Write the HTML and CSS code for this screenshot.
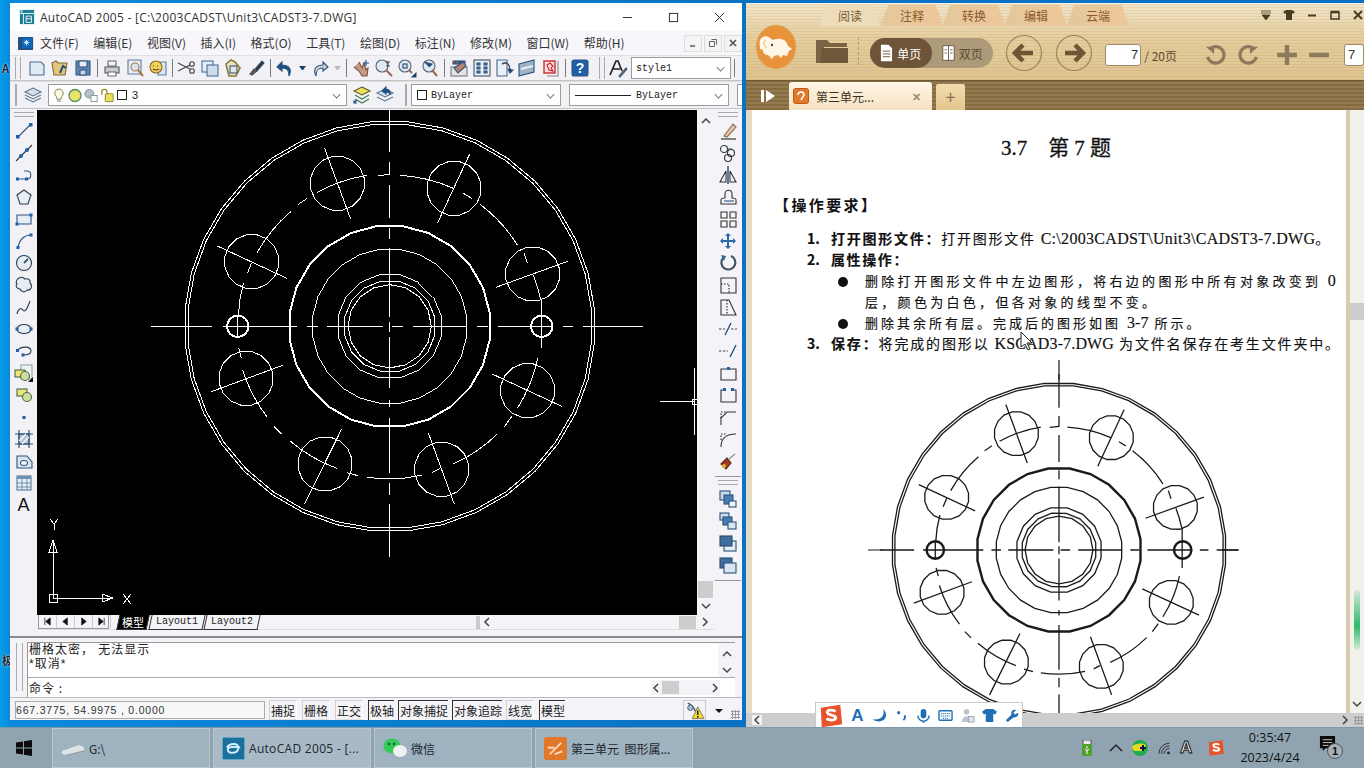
FILE: index.html
```html
<!DOCTYPE html>
<html lang="zh">
<head>
<meta charset="utf-8">
<title>AutoCAD 2005</title>
<link rel="stylesheet" href="styles.css">
</head>
<body>
<svg class="defs" aria-hidden="true">
  <defs>
    <polygon id="p16" class="fp" points="1,0 .924,.383 .707,.707 .383,.924 0,1 -.383,.924 -.707,.707 -.924,.383 -1,0 -.924,-.383 -.707,-.707 -.383,-.924 0,-1 .383,-.924 .707,-.707 .924,-.383"/>
    <polygon id="p24" class="fp" points="1,0 .966,.259 .866,.5 .707,.707 .5,.866 .259,.966 0,1 -.259,.966 -.5,.866 -.707,.707 -.866,.5 -.966,.259 -1,0 -.966,-.259 -.866,-.5 -.707,-.707 -.5,-.866 -.259,-.966 0,-1 .259,-.966 .5,-.866 .707,-.707 .866,-.5 .966,-.259"/>
    <polygon id="p36" class="fp" points="1,0 .985,.174 .94,.342 .866,.5 .766,.643 .643,.766 .5,.866 .342,.94 .174,.985 0,1 -.174,.985 -.342,.94 -.5,.866 -.643,.766 -.766,.643 -.866,.5 -.94,.342 -.985,.174 -1,0 -.985,-.174 -.94,-.342 -.866,-.5 -.766,-.643 -.643,-.766 -.5,-.866 -.342,-.94 -.174,-.985 0,-1 .174,-.985 .342,-.94 .5,-.866 .643,-.766 .766,-.643 .866,-.5 .94,-.342 .985,-.174"/>
    <g id="flange" class="flange" transform="translate(-659 -649)">
      <use href="#p36" transform="translate(659 649) rotate(5) scale(616)"/>
      <use href="#p36" transform="translate(659 649) rotate(5) scale(607)"/>
      <use class="thick" href="#p24" transform="translate(659 649) rotate(7.5) scale(303)"/>
      <use href="#p24" transform="translate(659 649) rotate(7.5) scale(233)"/>
      <use href="#p16" transform="translate(659 649) rotate(11.25) scale(158)"/>
      <use href="#p16" transform="translate(659 649) rotate(11.25) scale(138)"/>
      <use href="#p16" transform="translate(659 649) rotate(0) scale(125)"/>
      <use href="#p16" transform="translate(502 220) rotate(11.25) scale(82)"/>
      <use href="#p16" transform="translate(852 235) rotate(11.25) scale(82)"/>
      <use href="#p16" transform="translate(245 455) rotate(11.25) scale(82)"/>
      <use href="#p16" transform="translate(1088 492) rotate(11.25) scale(82)"/>
      <use href="#p16" transform="translate(228 805) rotate(11.25) scale(82)"/>
      <use href="#p16" transform="translate(1073 842) rotate(11.25) scale(82)"/>
      <use href="#p16" transform="translate(465 1062) rotate(11.25) scale(82)"/>
      <use href="#p16" transform="translate(815 1078) rotate(11.25) scale(82)"/>
      <use class="thick" href="#p16" transform="translate(203 649) scale(32)"/>
      <use class="thick" href="#p16" transform="translate(1115 649) scale(32)"/>
      <path d="M659 0V125M659 155V195M659 225V325M659 355V388M659 415V620M659 635V665M659 680V835M659 870V890M659 925V1090M659 1120V1155M659 1182V1320"/>
      <path d="M0 649H125M158 649H380M410 649H445M472 649H638M665 649H700M730 649H892M922 649H955M985 649H1145M1178 649H1210M1240 649H1320"/>
      <path d="M203 617V680M1113 570V690"/>
      <path d="M463 113L542 328M899 132L802 340M142 408L350 505M1193 454L978 532M338 766L124 845M966 792L1175 889M515 957L403 1183M775 969L853 1183"/>
      <path d="M690 196A454 454 0 0 1 850 235M880 250L905 265M930 283A454 454 0 0 1 1042 405M1062 430L1072 460M1090 495A454 454 0 0 1 1112 570M1113 690V715M1103 745A454 454 0 0 1 1042 895M1025 920L1003 950M982 972A454 454 0 0 1 848 1063M810 1075L787 1087M755 1096A454 454 0 0 1 592 1102M563 1097L530 1088M500 1075A454 454 0 0 1 360 993M335 973L312 950M292 922A454 454 0 0 1 218 780M214 745L206 715M205 615A454 454 0 0 1 220 520M232 490L245 458M260 430A454 454 0 0 1 362 305M385 283L412 265M440 248A454 454 0 0 1 592 196M625 197L659 193"/>
    </g>
  </defs>
</svg>

<main class="desktop">
  <div class="peek peek-a">A</div>
  <div class="peek peek-b">极</div>

  <section class="win cad">
    <header class="title">
      <svg class="appicon" viewBox="0 0 18 18"><rect x="1" y="1" width="16" height="16" fill="#1b7f96"/><path d="M1 5h16M5 5v12" stroke="#fff" stroke-width="1"/><path d="M8 8h6v7h-6zM8 11h6" fill="none" stroke="#fff"/><path d="M2 1l1 3 1-3" stroke="#bfe" fill="none"/></svg>
      <span class="title-text">AutoCAD 2005 - [C:\2003CADST\Unit3\CADST3-7.DWG]</span>
      <div class="caps">
        <svg viewBox="0 0 12 12"><path d="M1 6h10" stroke="#222"/></svg>
        <svg viewBox="0 0 12 12"><rect x="1.500" y="1.500" width="9" height="9" fill="none" stroke="#222"/></svg>
        <svg viewBox="0 0 12 12"><path d="M1 1l10 10M11 1L1 11" stroke="#222"/></svg>
      </div>
    </header>

    <nav class="menu">
      <svg class="docicon" viewBox="0 0 20 18"><rect x="1" y="2" width="16" height="14" rx="1" fill="#24507c"/><rect x="5" y="3" width="11" height="11" fill="#0d66b8"/><path d="M10 5v6M7 8h6M8 6l4 4M12 6l-4 4" stroke="#cfe9ff"/></svg>
      <span>文件(F)</span><span>编辑(E)</span><span>视图(V)</span><span>插入(I)</span><span>格式(O)</span><span>工具(T)</span><span>绘图(D)</span><span>标注(N)</span><span>修改(M)</span><span>窗口(W)</span><span>帮助(H)</span>
      <div class="mdi">
        <b><svg viewBox="0 0 10 10"><path d="M2 8h5" stroke="#666" stroke-width="1.600"/></svg></b>
        <b><svg viewBox="0 0 10 10"><path d="M3.500 1.500h5v5M1.500 3.500h5v5h-5z" fill="none" stroke="#666"/></svg></b>
        <b><svg viewBox="0 0 10 10"><path d="M2 2l6 6M8 2L2 8" stroke="#555" stroke-width="1.700"/></svg></b>
      </div>
    </nav>

    <div class="tb tb1">
      <i class="grip"></i>
      <svg class="i" viewBox="0 0 20 20"><path d="M3 4h11l3 3v10H3z" fill="#dfeaf5" stroke="#4a6f96"/></svg>
      <svg class="i" viewBox="0 0 20 20"><path d="M2 5l4-2 2 2h9l-2 12H4z" fill="#e2c67c" stroke="#7c6a35"/><path d="M10 15l3-7 3 2" stroke="#1f4f80" stroke-width="2" fill="none"/></svg>
      <svg class="i" viewBox="0 0 20 20"><path d="M3 3h14v14H3z" fill="#5d86b4" stroke="#33577f"/><rect x="6" y="3" width="8" height="6" fill="#e8eef6"/><rect x="7" y="12" width="6" height="5" fill="#c9d6e6"/></svg>
      <i class="sep"></i>
      <svg class="i" viewBox="0 0 20 20"><path d="M6 3h8v5H6z" fill="#f4f4f4" stroke="#666"/><path d="M3 9h14v6H3z" fill="#c8ccd4" stroke="#555"/><path d="M6 14h8v4H6z" fill="#fff" stroke="#666"/></svg>
      <svg class="i" viewBox="0 0 20 20"><path d="M3 2h13v14H3z" fill="#e6eef7" stroke="#5a7da3"/><circle cx="10" cy="9" r="4" fill="#d7e5ef" stroke="#a87b3a"/><path d="M13 12l5 6" stroke="#a87b3a" stroke-width="2"/></svg>
      <svg class="i" viewBox="0 0 20 20"><path d="M12 4h6v13h-8z" fill="#dbe8f3" stroke="#5a7da3"/><circle cx="8" cy="9" r="6" fill="#f2d35c" stroke="#8a6d1e"/><path d="M5 8h1M9 8h1M5 11q3 2 6 0" stroke="#533"/></svg>
      <i class="sep"></i>
      <svg class="i" viewBox="0 0 20 20"><path d="M1 5l12 6M1 13l12-6" stroke="#444"/><circle cx="15" cy="6" r="2.300" fill="none" stroke="#444"/><circle cx="15" cy="13" r="2.300" fill="none" stroke="#444"/></svg>
      <svg class="i" viewBox="0 0 20 20"><rect x="2" y="3" width="11" height="11" fill="#e6eef7" stroke="#4a6f96"/><rect x="7" y="7" width="11" height="11" fill="#cddcec" stroke="#4a6f96"/></svg>
      <svg class="i" viewBox="0 0 20 20"><path d="M3 6l5-4 4 2 5 6-4 8H6z" fill="#e8e4c8" stroke="#8d7a3a" stroke-width="1.600"/><rect x="7" y="8" width="7" height="7" fill="#dbe8f3" stroke="#456"/></svg>
      <svg class="i" viewBox="0 0 20 20"><path d="M4 16l4-5 3 2-5 4z" fill="#8c4a1e"/><path d="M9 11l7-8 2 2-7 8" fill="#333"/></svg>
      <i class="sep"></i>
      <svg class="i" viewBox="0 0 20 20"><path d="M7 4L2 9l5 4V10c5 0 7 2 7 8 3-6 1-11-7-11z" fill="#1c4f84"/></svg>
      <em class="drop"></em>
      <svg class="i" viewBox="0 0 20 20"><path d="M13 4l5 5-5 4V10c-5 0-7 2-7 8-3-6-1-11 7-11z" fill="#d2d2d2"/></svg>
      <em class="drop off"></em>
      <i class="sep"></i>
      <svg class="i" viewBox="0 0 20 20"><path d="M3 9l5 4 3 5h5l1-8-2 2-2-7-2 5-3-6" fill="#c79a86" stroke="#7a5244"/><path d="M15 2v6M12 5h6" stroke="#1f4f80"/></svg>
      <svg class="i" viewBox="0 0 20 20"><circle cx="8" cy="8" r="6" fill="#dfe9f3" stroke="#567"/><path d="M12 12l6 6" stroke="#965" stroke-width="2"/><path d="M14 3v5M12 4h4M12 8h4" stroke="#333" stroke-width=".8"/></svg>
      <svg class="i" viewBox="0 0 20 20"><circle cx="8" cy="8" r="6" fill="#dfe9f3" stroke="#567"/><rect x="6" y="6" width="4" height="4" fill="none" stroke="#246"/><path d="M12 12l3 3" stroke="#965" stroke-width="2"/><path d="M15 19h4v-4z" fill="#111"/></svg>
      <svg class="i" viewBox="0 0 20 20"><circle cx="9" cy="8" r="6" fill="#dfe9f3" stroke="#567"/><path d="M4 4l8 2-3 3" fill="#1f4f80"/><path d="M12 12l5 6" stroke="#965" stroke-width="2"/></svg>
      <i class="sep"></i>
      <svg class="i" viewBox="0 0 20 20"><rect x="2" y="9" width="16" height="9" fill="#e4e4e4" stroke="#778"/><path d="M4 3h3v3H4z" fill="#d33"/><path d="M7 3h3v3H7z" fill="#3a3"/><path d="M10 3h3v3h-3z" fill="#33c"/><path d="M13 3h3v3h-3z" fill="#c3c"/><path d="M5 10l9-6 3 4-8 7z" fill="#b9826a"/></svg>
      <svg class="i" viewBox="0 0 20 20"><rect x="2" y="2" width="16" height="16" fill="#eaf0f7" stroke="#456"/><path d="M5 5h3v2H5zM12 5h3v2h-3zM5 9h3v2H5zM12 9h3v2h-3zM5 13h3v2H5zM12 13h3v2h-3z" fill="#46709c"/></svg>
      <svg class="i" viewBox="0 0 20 20"><path d="M2 2h10v16H2z" fill="#e9f0f7" stroke="#47698d"/><path d="M7 6c5-3 8 1 8 6" fill="none" stroke="#456" stroke-width="1.600"/><path d="M13 11l2 4 3-3z" fill="#234"/></svg>
      <svg class="i" viewBox="0 0 20 20"><path d="M1 6l15-4v12L1 18z" fill="#9eb3c6"/><path d="M3 11l12-3" stroke="#e9eef3" stroke-width="2"/></svg>
      <svg class="i" viewBox="0 0 20 20"><path d="M17 3v15H6" fill="none" stroke="#888"/><path d="M3 3h11v12H3z" fill="#f8dfe0" stroke="#c33" stroke-width="1.400"/><path d="M6 7l3-2 3 3-2 2 2 3-4-1z" fill="none" stroke="#c22"/></svg>
      <i class="sep"></i>
      <svg class="i" viewBox="0 0 20 20"><rect x="2" y="2" width="16" height="16" rx="2" fill="#1f5fa8"/><text x="10" y="15" class="help">?</text></svg>
      <i class="grip grip-mid"></i>
      <svg class="i" viewBox="0 0 20 20"><path d="M2 17L8 3h2l4 10M5 11h7" fill="none" stroke="#222" stroke-width="1.700"/><path d="M11 18l7-8 1 1-7 8z" fill="#b8833c"/></svg>
      <div class="combo combo-style"><span class="mono">style1</span><u></u></div>
      <i class="sep sep-end"></i>
    </div>

    <div class="tb tb2">
      <i class="grip"></i>
      <svg class="i" viewBox="0 0 20 20"><path d="M10 3l8 4-8 4-8-4z" fill="#d7e0ea" stroke="#5a7692"/><path d="M2 10l8 4 8-4M2 13l8 4 8-4" fill="none" stroke="#5a7692"/></svg>
      <div class="combo combo-layer">
        <svg viewBox="0 0 14 16" class="ci"><path d="M7 1a4.600 4.600 0 0 1 3 8l-1 3H5L4 9a4.600 4.600 0 0 1 3-8zM5 14h4" fill="#fdfbe3" stroke="#7b7b5c"/></svg>
        <svg viewBox="0 0 14 14" class="ci"><circle cx="7" cy="7" r="6" fill="#e9e26a" stroke="#4f8f68" stroke-width="1.300"/></svg>
        <svg viewBox="0 0 16 16" class="ci"><circle cx="6" cy="6" r="5" fill="#b3c0c8" stroke="#7a8b95"/><rect x="8" y="8" width="7" height="7" fill="#fff" stroke="#888"/></svg>
        <svg viewBox="0 0 16 16" class="ci"><path d="M2 7V4a3 3 0 0 1 6 0v3" fill="none" stroke="#9b8b2e" stroke-width="1.500"/><rect x="6" y="6" width="9" height="9" rx="1" fill="#ece15e" stroke="#8a7a24"/></svg>
        <span class="swatch"></span><span class="layer-name">3</span><u></u>
      </div>
      <svg class="i i-lm" viewBox="0 0 20 20"><path d="M10 2l8 4-8 4-8-4z" fill="#ecdf62" stroke="#5c5a20"/><path d="M3 10l7 4 7-4M3 14l7 4 7-4" fill="none" stroke="#3f7d5a"/><path d="M2 18l3-3M2 15v3h3" stroke="#1f4f80" fill="none"/></svg>
      <svg class="i" viewBox="0 0 20 20"><path d="M10 4l8 4-8 4-8-4z" fill="#d7e0ea" stroke="#5a7692"/><path d="M2 12l8 4 8-4" fill="none" stroke="#5a7692"/><path d="M11 2L7 6l4 3V7c3 0 4 1 4 3 1-4-1-6-4-6z" fill="#1c4f84"/></svg>
      <i class="grip grip-two"></i>
      <div class="combo combo-color"><span class="swatch"></span><span class="mono">ByLayer</span><u></u></div>
      <i class="vline"></i>
      <div class="combo combo-type"><span class="ln"></span><span class="mono">ByLayer</span><u></u></div>
      <i class="vline"></i>
      <div class="combo combo-last"><span class="ln"></span></div>
    </div>

    <div class="work">
      <aside class="vbar vbar-l">
        <i class="hgrip"></i>
        <svg class="i" viewBox="0 0 20 20"><path d="M4 16L16 4"/><rect class="d" x="2" y="14" width="3.500" height="3.500"/><rect class="d" x="15" y="2" width="3.500" height="3.500"/></svg>
        <svg class="i" viewBox="0 0 20 20"><path class="k" d="M2 18L18 2"/><circle class="d" cx="7" cy="13" r="2"/><circle class="d" cx="13" cy="7" r="2"/></svg>
        <svg class="i" viewBox="0 0 20 20"><path d="M4 14h9c5 0 5-8 0-8h-3"/><rect class="d" x="2" y="12.500" width="3" height="3"/><rect class="d" x="11" y="12.500" width="3" height="3"/></svg>
        <svg class="i" viewBox="0 0 20 20"><path d="M10 3l7 5-3 9H6L3 8z" class="k2"/></svg>
        <svg class="i" viewBox="0 0 20 20"><path d="M3 6h14v9H3z" fill="#e6edf5"/><rect class="d" x="1.500" y="13.500" width="3" height="3"/><rect class="d" x="15.500" y="4.500" width="3" height="3"/></svg>
        <svg class="i" viewBox="0 0 20 20"><path d="M4 17C5 9 10 4 17 4"/><rect class="d" x="2.500" y="15" width="3" height="3"/><rect class="d" x="15.500" y="2.500" width="3" height="3"/></svg>
        <svg class="i" viewBox="0 0 20 20"><circle cx="10" cy="10" r="7.500" class="k2"/><path d="M10 10l4-4" stroke-width="1.800"/></svg>
        <svg class="i" viewBox="0 0 20 20"><path class="k2" d="M5 3c3-2 5 0 6 1 3-1 6 1 5 4 3 3 1 8-3 7-2 3-6 2-7-1-3 0-5-3-3-5-2-2 0-5 2-6z"/></svg>
        <svg class="i" viewBox="0 0 20 20"><path class="k3" d="M3 17c1-5 4-7 6-4s4-1 7-9"/></svg>
        <svg class="i" viewBox="0 0 20 20"><ellipse cx="10" cy="10" rx="7" ry="4.500" class="k2"/><rect class="d" x="1.500" y="8.500" width="3" height="3"/><rect class="d" x="15.500" y="8.500" width="3" height="3"/></svg>
        <svg class="i" viewBox="0 0 20 20"><path class="k3" d="M4 9c3-4 13-4 13 1 0 3-4 4-8 4"/><rect class="d" x="2" y="8" width="3" height="3"/><rect class="d" x="7.500" y="12.500" width="3" height="3"/></svg>
        <svg class="i" viewBox="0 0 20 20"><rect x="7" y="2" width="11" height="14" fill="#f0f2f6" stroke="#8aa"/><rect x="1" y="7" width="10" height="7" fill="#ece47a" stroke="#4a6b46"/><circle cx="11" cy="13" r="4.500" fill="#cfdca0" stroke="#4a6b46"/><path d="M14 19h5v-5z" fill="#111" stroke="none"/></svg>
        <svg class="i" viewBox="0 0 20 20"><rect x="3" y="4" width="10" height="7" fill="#ece47a" stroke="#4a6b46"/><circle cx="13" cy="12" r="4.500" fill="#cfdca0" stroke="#4a6b46"/></svg>
        <svg class="i" viewBox="0 0 20 20"><rect class="d" x="8.500" y="9" width="3" height="3"/></svg>
        <svg class="i" viewBox="0 0 20 20"><path d="M5 5h10v10H5z" fill="#b9c8d8"/><path d="M1 5h18M1 15h18M5 1v18M15 1v18" stroke="#2b4a70"/><path d="M5 12l7-7M8 15l7-7" stroke="#fff"/></svg>
        <svg class="i" viewBox="0 0 20 20"><path d="M3 5h10l5 6v6H3z" fill="#d9e6f2"/><ellipse cx="10" cy="12" rx="3.500" ry="2.500" fill="#fff"/></svg>
        <svg class="i" viewBox="0 0 20 20"><rect x="3" y="3" width="14" height="14" fill="#e6eef7" stroke="#5b7c9f"/><rect x="3" y="3" width="14" height="3" fill="#6d8fb2" stroke="none"/><path d="M3 10h14M3 14h14M8 6v11M13 6v11" stroke="#5b7c9f" stroke-width=".8"/></svg>
        <span class="a-tool">A</span>
      </aside>

      <div class="drawcol">
        <div class="drawrow">
          <div class="canvas">
            <svg class="cad-svg" viewBox="0 0 660 505">
              <use href="#flange" transform="translate(352.700 216.300) scale(.3333)"/>
              <g class="ucs">
                <path d="M114 216.500H133M573 216.500H606M352.500 440V447"/>
                <path d="M16 488V430M16 488H75"/>
                <rect x="12" y="484" width="8" height="8"/>
                <path d="M12 442l4-12 4 12zM65 484l11 4-11 4z"/>
                <path d="M13 409l4 5 4-5M17 414v6M86 484l8 10M94 484l-8 10"/>
                <path d="M657 258V325M623 291H657"/>
                <rect x="655" y="289" width="5" height="5"/>
              </g>
            </svg>
          </div>
          <div class="vscroll">
            <svg class="arr" viewBox="0 0 10 10"><path d="M1 7l4-4 4 4"/></svg>
            <span class="fill"></span>
            <span class="sthumb"></span>
            <svg class="arr" viewBox="0 0 10 10"><path d="M1 3l4 4 4-4"/></svg>
          </div>
        </div>
        <div class="tabs">
          <div class="navs">
            <svg viewBox="0 0 10 10"><path d="M2 1v8M8 1v8L3 5z"/></svg>
            <svg viewBox="0 0 10 10"><path d="M7 1v8L2 5z"/></svg>
            <svg viewBox="0 0 10 10"><path d="M3 1v8l5-4z"/></svg>
            <svg viewBox="0 0 10 10"><path d="M8 1v8M2 1v8l5-4z"/></svg>
          </div>
          <span class="tab tab-on">模型</span>
          <span class="tab">Layout1</span>
          <span class="tab">Layout2</span>
          <div class="hs">
            <span class="hs-start"></span>
            <svg class="arr" viewBox="0 0 10 10"><path d="M7 1L3 5l4 4"/></svg>
            <span class="fill"></span>
            <span class="hthumb"></span>
            <svg class="arr" viewBox="0 0 10 10"><path d="M3 1l4 4-4 4"/></svg>
          </div>
        </div>
      </div>

      <aside class="vbar vbar-r">
        <i class="hgrip"></i>
        <svg class="i" viewBox="0 0 20 20"><path d="M3 18h15" stroke="#222"/><path d="M6 15L15 3l3 3-9 10z" fill="#e9c2a8" stroke="#8a6a4e"/></svg>
        <svg class="i" viewBox="0 0 20 20"><g class="k"><circle cx="6" cy="6" r="3.500"/><circle cx="13" cy="10" r="3.500"/><circle cx="10" cy="15" r="3.500"/></g><path d="M9 6h5"/></svg>
        <svg class="i" viewBox="0 0 20 20"><path d="M10 1v18" stroke-width="1.500"/><path class="k" d="M8 6v11H2zM12 6v11h6z"/></svg>
        <svg class="i" viewBox="0 0 20 20"><path class="k" d="M3 17v-4c0-2 3-2 4-2V7c0-5 7-5 7 0v4c2 0 4 0 4 2v4z"/><path d="M6 14c3 0 9 0 10 0"/></svg>
        <svg class="i" viewBox="0 0 20 20"><path class="k" d="M3 3h6v6H3zM12 3h6v6h-6zM3 12h6v6H3zM12 12h6v6h-6z"/></svg>
        <svg class="i" viewBox="0 0 20 20"><path d="M10 2l3 3h-2v4h4V7l3 3-3 3v-2h-4v4h2l-3 3-3-3h2v-4H5v2l-3-3 3-3v2h4V5H7z" fill="#2b6aa8" stroke="none"/></svg>
        <svg class="i" viewBox="0 0 20 20"><path d="M5 5A7 7 0 1 0 13 3" stroke="#456" stroke-width="2.200"/><path d="M3 2l5 1-2 5z" fill="#2b6aa8" stroke="none"/></svg>
        <svg class="i" viewBox="0 0 20 20"><path class="k" d="M3 3h15v15H3z"/><path d="M3 9h8v9" stroke-dasharray="1.500 1.500" stroke="#222"/></svg>
        <svg class="i" viewBox="0 0 20 20"><path class="k" d="M3 3h8l7 15H3z"/><path d="M9 3v15" stroke-dasharray="1.500 1.500" stroke="#222"/></svg>
        <svg class="i" viewBox="0 0 20 20"><path d="M1 10h6M13 10h6" stroke-dasharray="2.500 1.500" stroke="#445"/><path d="M7 16L13 4" stroke-width="1.400"/></svg>
        <svg class="i" viewBox="0 0 20 20"><path d="M1 10h9" stroke-dasharray="2.500 1.500" stroke="#445"/><path d="M12 16L18 4" stroke-width="1.400"/></svg>
        <svg class="i" viewBox="0 0 20 20"><path class="k" d="M3 6h15v11H3z"/><rect class="d" x="9" y="4" width="3" height="3"/></svg>
        <svg class="i" viewBox="0 0 20 20"><path class="k" d="M6 5H3v12h15V5h-3"/><rect class="d" x="5" y="3" width="3" height="3"/><rect class="d" x="13" y="3" width="3" height="3"/></svg>
        <svg class="i" viewBox="0 0 20 20"><path class="k" d="M3 18V11l6-6h9"/><path d="M3 11V5h6" stroke-dasharray="1.500 1.500" stroke="#222"/></svg>
        <svg class="i" viewBox="0 0 20 20"><path class="k" d="M3 18c0-8 5-13 15-13"/><path d="M3 11V5h6" stroke-dasharray="1.500 1.500" stroke="#222"/></svg>
        <svg class="i" viewBox="0 0 20 20"><path d="M3 13l6-6 4 5-5 6z" fill="#a13a1c" stroke="#5a2410"/><path d="M11 8l6-5" stroke="#888"/><circle cx="6" cy="15" r="2" fill="#e0b02c" stroke="none"/></svg>
        <i class="hline"></i>
        <i class="hgrip"></i>
        <svg class="i" viewBox="0 0 20 20"><rect x="2" y="2" width="10" height="9" fill="#cfdcea"/><rect x="6" y="6" width="9" height="9" fill="#4b7cb0" stroke="#2c507a"/><rect x="11" y="12" width="7" height="6" fill="#f0f4f8"/></svg>
        <svg class="i" viewBox="0 0 20 20"><rect x="2" y="2" width="9" height="7" fill="#cfdcea"/><rect x="5" y="6" width="9" height="8" fill="#4b7cb0" stroke="#2c507a"/><rect x="10" y="11" width="8" height="7" fill="#dbe5f0"/></svg>
        <svg class="i" viewBox="0 0 20 20"><rect x="6" y="8" width="12" height="10" fill="#e5edf5"/><rect x="2" y="3" width="12" height="10" fill="#3f6e9f" stroke="#28496e"/></svg>
        <svg class="i" viewBox="0 0 20 20"><rect x="2" y="3" width="12" height="10" fill="#3f6e9f" stroke="#28496e"/><rect x="6" y="8" width="12" height="10" fill="#dbe5f0"/></svg>
        <i class="hline"></i>
      </aside>
    </div>

    <div class="cmd">
      <i class="vgrip"></i>
      <div class="cmd-main">
        <div class="history">
          <div class="history-text"><p>栅格太密， 无法显示</p><p>*取消*</p></div>
          <div class="cscroll">
            <svg class="arr" viewBox="0 0 10 10"><path d="M1 7l4-4 4 4"/></svg>
            <svg class="arr" viewBox="0 0 10 10"><path d="M1 3l4 4 4-4"/></svg>
          </div>
        </div>
        <div class="prompt">
          <span class="prompt-text">命令 :</span>
          <div class="cmd-hs">
            <svg class="arr" viewBox="0 0 10 10"><path d="M7 1L3 5l4 4"/></svg>
            <span class="hthumb"></span>
            <span class="fill"></span>
            <svg class="arr" viewBox="0 0 10 10"><path d="M3 1l4 4-4 4"/></svg>
          </div>
        </div>
      </div>
    </div>

    <footer class="status">
      <div class="coords">667.3775, 54.9975 , 0.0000</div>
      <span class="sb">捕捉</span><span class="sb">栅格</span><span class="sb">正交</span>
      <span class="sb on">极轴</span><span class="sb on">对象捕捉</span><span class="sb on">对象追踪</span>
      <span class="sb">线宽</span><span class="sb on">模型</span>
      <span class="fill"></span>
      <div class="warn"><svg viewBox="0 0 22 20"><path d="M3 2c3 1 7 5 9 10" stroke="#456" fill="none" stroke-width="1.500"/><circle cx="6" cy="7" r="3" fill="#a8c0d8" stroke="#456"/><path d="M14 6l7 13H8z" fill="#f7dc2e" stroke="#777"/><path d="M14 10v5M14 16v2" stroke="#111" stroke-width="1.500"/></svg></div>
      <span class="tri"></span>
      <span class="resize"></span>
    </footer>
  </section>

  <section class="win pdf">
    <div class="pdf-top">
      <div class="ribbon">
        <span class="rib rib-on">阅读</span><span class="rib">注释</span><span class="rib">转换</span><span class="rib">编辑</span><span class="rib">云端</span>
        <div class="pdf-caps">
          <svg viewBox="0 0 12 12"><path d="M1 2h10M1 4h10M2 6h8l-4 5z" stroke="#4a3a22" fill="#4a3a22" stroke-width=".8"/></svg>
          <svg viewBox="0 0 12 12"><path d="M0 3l3-2h6l3 2-2 2-1-1v7H3V4L2 5z" fill="#4a3a22"/></svg>
          <svg viewBox="0 0 12 12"><path d="M2 6.500h8" stroke="#4a3a22" stroke-width="2"/></svg>
          <svg viewBox="0 0 12 12"><path d="M2 3h8v7H2z" fill="none" stroke="#4a3a22" stroke-width="1.500"/><path d="M2 3h8" stroke="#4a3a22" stroke-width="2.500"/></svg>
          <svg viewBox="0 0 12 12"><path d="M2 2l8 8M10 2l-8 8" stroke="#4a3a22" stroke-width="2"/></svg>
        </div>
      </div>
      <div class="pdf-tools">
        <svg class="logo" viewBox="0 0 44 46"><ellipse cx="22" cy="23" rx="20" ry="22" fill="#e8933b" stroke="#d9b36f"/><path d="M6 16c2-4 7-5 10-2l3 2c6-3 14-1 15 6l4 3-3 2-2 5-4-1-2 3-3-3-4 1-2 3-4-4c-3 0-5-2-5-5l-3-1c0-3-1-6 0-9z" fill="#fff6e6"/><path d="M12 16c-3 1-3 6 1 8" fill="none" stroke="#e8b274"/><circle cx="18" cy="21" r="1.200" fill="#733"/></svg>
        <svg class="folder" viewBox="0 0 34 28"><path d="M1 27V4h11l3 3h17v4H9L7 27z" fill="#7a6343"/><path d="M5 27l2-15h26v15z" fill="#6f583a"/></svg>
        <i class="dash"></i>
        <div class="toggle">
          <span class="tg tg-on"><svg viewBox="0 0 14 20"><path d="M1 1h8l4 4v14H1z" fill="#fff"/><path d="M3 8h8M3 11h8M3 14h8" stroke="#6f5638"/></svg>单页</span>
          <span class="tg"><svg viewBox="0 0 16 20"><path d="M1 1h14v18H1z" fill="#fff" stroke="#5a4830"/><path d="M8 1v18M3 6h3M3 10h3M10 6h3M10 10h3" stroke="#5a4830"/></svg>双页</span>
        </div>
        <svg class="nav nav-prev" viewBox="0 0 38 38"><circle cx="19" cy="19" r="17.500" fill="none" stroke="#9b8560" stroke-width="1.200"/><path d="M28 19H11M18 11l-8 8 8 8" fill="none" stroke="#6d5535" stroke-width="4.500"/></svg>
        <svg class="nav" viewBox="0 0 38 38"><circle cx="19" cy="19" r="17.500" fill="none" stroke="#9b8560" stroke-width="1.200"/><path d="M10 19h17M20 11l8 8-8 8" fill="none" stroke="#6d5535" stroke-width="4.500"/></svg>
        <span class="pageinput">7</span>
        <span class="pagetotal">/ 20页</span>
        <svg class="rot rot-a" viewBox="0 0 24 24"><path d="M7 5a9 9 0 1 1-3 9" fill="none" stroke="#8c7a5c" stroke-width="3.500"/><path d="M2 3h9v8z" fill="#8c7a5c"/></svg>
        <svg class="rot" viewBox="0 0 24 24"><path d="M17 5a9 9 0 1 0 3 9" fill="none" stroke="#8c7a5c" stroke-width="3.500"/><path d="M22 3h-9v8z" fill="#8c7a5c"/></svg>
        <svg class="rot rot-p" viewBox="0 0 20 20"><path d="M10 1v18M1 10h18" stroke="#8c7a5c" stroke-width="4"/></svg>
        <svg class="rot rot-m" viewBox="0 0 20 20"><path d="M1 10h18" stroke="#8c7a5c" stroke-width="4"/></svg>
        <span class="pageinput pageinput-2">7</span>
      </div>
    </div>
    <div class="doctabs">
      <svg class="dock" viewBox="0 0 16 14"><path d="M1 1h3v12H1zM6 1l9 6-9 6z" fill="#fff"/></svg>
      <div class="doctab">
        <svg class="fav" viewBox="0 0 16 16"><rect x=".5" y=".5" width="15" height="15" rx="2" fill="#e2792a" stroke="#b95b1a"/><path d="M5 7c0-4 6-4 6 0L8 12" fill="none" stroke="#fff" stroke-width="1.600"/></svg>
        <span class="tabname">第三单元...</span>
        <span class="tabx">✕</span>
      </div>
      <div class="plus">+</div>
    </div>
    <div class="pdf-body">
      <article class="page">
        <h1>3.7&nbsp;&nbsp;&nbsp;&nbsp;第 7 题</h1>
        <h2>【操作要求】</h2>
        <ol class="req">
          <li class="l1"><span class="n">1.</span><b>打开图形文件：</b>打开图形文件 <span class="lat">C:\2003CADST\Unit3\CADST3-7.DWG</span>。</li>
          <li class="l2"><span class="n">2.</span><b>属性操作：</b></li>
          <li class="l3"><span class="dot"></span>删除打开图形文件中左边图形，将右边的图形中所有对象改变到 <span class="lat">0</span></li>
          <li class="l4">层，颜色为白色，但各对象的线型不变。</li>
          <li class="l5"><span class="dot"></span>删除其余所有层。完成后的图形如图 <span class="lat">3-7</span> 所示。</li>
          <li class="l6"><span class="n">3.</span><b>保存：</b>将完成的图形以 <span class="lat">KSCAD3-7.DWG</span> 为文件名保存在考生文件夹中。</li>
        </ol>
        <svg class="scan" viewBox="0 0 594 353">
          <use href="#flange" transform="translate(307 190) scale(.2713)"/>
          <path class="scan-x" d="M307 0V20M116 190H130M470 190H487"/>
        </svg>
      </article>
      <div class="pdf-vs">
        <span class="pdf-thumb"></span>
        <span class="pdf-green"></span>
        <svg class="arr" viewBox="0 0 10 10"><path d="M1 3l4 4 4-4"/></svg>
      </div>
    </div>
    <div class="pdf-hs">
      <svg class="arr" viewBox="0 0 10 10"><path d="M7 1L3 5l4 4"/></svg>
      <span class="pdf-hthumb"></span>
      <svg class="arr" viewBox="0 0 10 10"><path d="M3 1l4 4-4 4"/></svg>
      <span class="resize"></span>
    </div>
  </section>

  <svg class="cursor" viewBox="0 0 12 20"><path d="M1 1v15l4-3 3 6 2-1-3-6h5z" fill="#fff" stroke="#222"/></svg>

  <div class="ime">
    <svg viewBox="0 0 28 28" class="ime-s"><path d="M3 5l21-3 2 21-22 3z" fill="#e8532b"/><path d="M19 9c-3-2-9-2-9 1 0 4 9 2 9 6 0 3-6 3-10 1" fill="none" stroke="#fff" stroke-width="3"/></svg>
    <span class="ime-a">A</span>
    <svg viewBox="0 0 16 16"><path d="M12 1c2 8-3 12-11 11 4 4 13 3 14-4 0-3-1-5-3-7z" fill="#1f6fb5"/></svg>
    <svg viewBox="0 0 16 16"><circle cx="5" cy="5" r="1.700" fill="#1f6fb5"/><path d="M11 8c1 1 1 3-1 5" stroke="#1f6fb5" stroke-width="2" fill="none"/></svg>
    <svg viewBox="0 0 16 16"><rect x="5" y="1" width="6" height="10" rx="3" fill="#1f6fb5"/><path d="M2 8a6 6 0 0 0 12 0M8 14v2" stroke="#1f6fb5" stroke-width="1.500" fill="none"/></svg>
    <svg viewBox="0 0 16 16"><rect x="1" y="3" width="14" height="10" rx="1" fill="none" stroke="#1f6fb5" stroke-width="1.500"/><path d="M3 6h10M3 8.500h10M5 11h6" stroke="#1f6fb5" stroke-dasharray="1.500 .7"/></svg>
    <svg viewBox="0 0 16 16"><circle cx="7" cy="4" r="3" fill="#b9c4d0"/><path d="M2 15c0-8 10-8 10 0z" fill="#b9c4d0"/><rect x="9" y="9" width="6" height="6" fill="#dde3ea" stroke="#9aa6b4"/></svg>
    <svg viewBox="0 0 16 16"><path d="M0 4l4-3h8l4 3-2 3-2-1v9H4V6L2 7z" fill="#1f6fb5"/></svg>
    <svg viewBox="0 0 16 16"><path d="M2 13l6-6c-1-3 1-6 5-5l-3 3 2 2 3-2c1 4-3 6-5 5l-6 5z" fill="#1f6fb5"/></svg>
  </div>

  <footer class="taskbar">
    <svg class="start" viewBox="0 0 16 16"><path d="M0 2.500l7-1v6H0zM8 1.300l8-1.200v7.400H8zM0 8.500h7v6l-7-1zM8 8.500h8v7.400l-8-1.200z" fill="#0b0b0b"/></svg>
    <div class="task">
      <svg viewBox="0 0 24 16" class="t-i"><path d="M1 11l17-6 5 2v4l-17 4-5-1z" fill="#dfe3e6"/><path d="M6 15l17-4" stroke="#8f979d"/></svg>
      <span>G:\</span>
    </div>
    <div class="task task-on">
      <svg viewBox="0 0 24 24" class="t-i t-cad"><rect width="24" height="24" fill="#1a6f9c" stroke="#bde"/><path d="M5 11c3-5 12-5 12 0 0 7-11 7-11 2 0-3 8-3 13-2" fill="none" stroke="#cfeeff" stroke-width="2"/></svg>
      <span>AutoCAD 2005 - [...</span>
    </div>
    <div class="task">
      <svg viewBox="0 0 24 20" class="t-i"><ellipse cx="9" cy="8" rx="8.500" ry="7.500" fill="#35c95a"/><ellipse cx="17" cy="13" rx="7" ry="6" fill="#eef1f2"/><circle cx="6" cy="6" r="1.200" fill="#0e5a24"/><circle cx="11" cy="6" r="1.200" fill="#0e5a24"/></svg>
      <span>微信</span>
    </div>
    <div class="task">
      <svg viewBox="0 0 24 24" class="t-i t-pdf"><rect width="24" height="24" rx="3" fill="#e2792a"/><path d="M6 18L18 6M4 11h7M11 18l8-3" stroke="#fde2c8" stroke-width="1.800"/></svg>
      <span>第三单元&nbsp;&nbsp;图形属...</span>
    </div>
    <div class="tray">
      <svg class="tr-usb" viewBox="0 0 12 16"><rect x="2" y="0" width="8" height="5" fill="#e8e8e8" stroke="#555"/><rect x="1" y="4" width="10" height="12" rx="1" fill="#4fa22c"/><path d="M6 6v8M4 9l2 2 2-2" stroke="#fff"/></svg>
      <svg class="tr-up" viewBox="0 0 14 8"><path d="M1 7l6-6 6 6" fill="none" stroke="#111" stroke-width="1.200"/></svg>
      <svg class="tr-g" viewBox="0 0 18 18"><circle cx="9" cy="9" r="8" fill="#1fae4f"/><path d="M1 9a8 4 0 0 1 14-3l-3 6H3z" fill="#dfd92e"/><path d="M12 6v6M9 9h6" stroke="#114" stroke-width="2"/></svg>
      <svg class="tr-w" viewBox="0 0 16 14"><path d="M1 13a12 12 0 0 1 12-12M4 13a9 9 0 0 1 9-9M7 13a6 6 0 0 1 6-6" fill="none" stroke="#222"/><circle cx="12" cy="12" r="1.600" fill="#222"/></svg>
      <span class="tr-a">A</span>
      <svg class="tr-s" viewBox="0 0 28 28"><path d="M3 5l21-3 2 21-22 3z" fill="#e8532b"/><path d="M19 9c-3-2-9-2-9 1 0 4 9 2 9 6 0 3-6 3-10 1" fill="none" stroke="#fff" stroke-width="3"/></svg>
      <div class="clock"><span>0:35:47</span><span>2023/4/24</span></div>
      <div class="notify">
        <svg viewBox="0 0 18 18"><path d="M1 1h16v13H7l-3 3v-3H1z" fill="#0b0b0b"/><path d="M4 5h10M4 8h10M4 11h6" stroke="#fff" stroke-width=".8"/></svg>
        <span class="badge">1</span>
      </div>
    </div>
  </footer>
</main>
</body>
</html>
```

FILE: styles.css
```css
* { box-sizing: border-box; }
html, body { margin: 0; padding: 0; }
body { width: 1364px; height: 768px; overflow: hidden; font-family: "Noto Sans CJK SC", "Liberation Sans", sans-serif; font-size: 12px; color: #222; }
svg { display: block; flex: none; }
i, em, u { display: block; font-style: normal; text-decoration: none; }
p, h1, h2, ol { margin: 0; padding: 0; }
.fill { flex: 1; }
.defs { position: absolute; width: 0; height: 0; }

.desktop { position: relative; width: 1364px; height: 768px; overflow: hidden; background: linear-gradient(90deg, #049de9 0, #0b89dc 10px, #0a72c4 745px, #0a72c4 100%); }
.peek { position: absolute; left: 2px; color: #123; font-size: 11px; font-weight: 700; text-shadow: 0 0 2px #fff; }
.peek-a { top: 60px; }
.peek-b { top: 652px; }

.win { position: absolute; }
.cad { left: 10px; top: 3px; width: 732px; height: 717px; display: flex; flex-direction: column; background: #f4f3f7; overflow: hidden; }

.title { height: 28px; background: #fff; display: flex; align-items: center; padding-left: 8px; flex: none; }
.appicon { width: 16px; height: 16px; margin-left: 1px; }
.title-text { font-family: "Open Sans", sans-serif; font-size: 12px; margin-left: 5px; color: #333; letter-spacing: .27px; }
.caps { margin-left: auto; display: flex; gap: 35px; margin-right: 17px; }
.caps svg { width: 11px; height: 11px; }

.menu { height: 24px; flex: none; display: flex; align-items: center; gap: 14.500px; padding-left: 7px; font-size: 12px; color: #333; background: #f7f6fa; }
.docicon { width: 19px; height: 17px; margin-right: -10.500px; }
.menu span { white-space: nowrap; line-height: 22px; }
.mdi { margin-left: auto; display: flex; gap: 2px; }
.mdi b { width: 18px; height: 17px; background: #f4f4f4; border: 1px solid #dedede; display: flex; align-items: center; justify-content: center; }
.mdi svg { width: 10px; height: 10px; }

.tb { flex: none; height: 28px; display: flex; align-items: center; background: #f2f1f5; border-bottom: 1px solid #c4c4c4; border-top: 1px solid #e0e0e0; padding-left: 5px; }
.i { width: 20px; height: 20px; fill: none; stroke: #2e557f; stroke-width: 1.1; }
.tb1 { gap: 3px; height: 26px; }
.grip { width: 6px; height: 22px; border-left: 1px solid #aaa; border-right: 1px solid #aaa; margin-right: 3px; }
.grip-mid { margin-left: 6px; margin-right: 0; }
.sep { width: 1px; height: 18px; background: #7b7b7b; margin: 0 1px; }
.sep-end { margin-left: 0; }
.drop { width: 7px; height: 0; border-top: 4px solid #1c3f68; border-left: 3px solid transparent; border-right: 3px solid transparent; margin: 0 1px; }
.drop.off { border-top-color: #bdbdbd; }
.help { fill: #fff; stroke: none; font: 700 14px "Liberation Sans", sans-serif; text-anchor: middle; }
.combo { background: #fff; border: 1px solid #9c9c9c; height: 22px; display: flex; align-items: center; position: relative; padding-left: 4px; flex: none; }
.combo > u { position: absolute; right: 6px; top: 6px; width: 7px; height: 7px; border-right: 1px solid #555; border-bottom: 1px solid #555; transform: rotate(45deg) scale(.8); }
.mono { font-family: "Liberation Mono", monospace; font-size: 10px; }
.combo-style { width: 100px; height: 22px; }
.combo-layer { width: 299px; margin-left: 2px; gap: 2px; padding-left: 3px; }
.ci { width: 14px; height: 15px; }
.swatch { width: 10px; height: 10px; border: 1px solid #222; display: block; margin-left: 1px; margin-right: 2px; }
.layer-name { font-size: 11px; margin-left: 1px; font-family: "Liberation Sans", sans-serif; }
.tb2 { gap: 3px; padding-left: 5px; }
.i-lm { margin-left: 2px; }
.grip-two { margin-left: 7px; width: 5px; margin-right: 0; }
.combo-color { width: 150px; margin-left: 1px; }
.combo-color .swatch { margin-left: 1px; margin-right: 4px; }
.vline { width: 1px; height: 20px; background: #aaa; margin: 0 1px; }
.combo-type { width: 160px; }
.ln { width: 60px; height: 1px; background: #222; margin: 0 6px 0 0; }
.combo-type .ln { width: 56px; margin-left: 1px; margin-right: 5px; }
.combo-last { width: 30px; }

.work { flex: 1; min-height: 0; display: flex; padding-top: 1px; }
.vbar { width: 27px; flex: none; display: flex; flex-direction: column; align-items: center; gap: 2px; padding-top: 2px; background: #f2f1f5; }
.hgrip { width: 20px; height: 5px; border-top: 1px solid #aaa; border-bottom: 1px solid #aaa; margin-bottom: 2px; }
.vbar-r { width: 28px; background: #f4f3f7; }
.vbar-r .i { stroke: #26527e; }
.hline { width: 26px; height: 1px; background: #999; margin: 3px 0 1px; }
.d { fill: #1f5fa8; stroke: none; }
.k { stroke: #333; }
.k2 { stroke: #2c3e50; fill: #e8edf3; }
.k3 { stroke: #2c3e50; fill: none; }
.a-tool { font: 400 18px "Liberation Sans", sans-serif; line-height: 20px; color: #111; }

.drawcol { width: 677px; flex: none; display: flex; flex-direction: column; }
.drawrow { height: 505px; flex: none; display: flex; }
.canvas { width: 660px; height: 505px; background: #000; flex: none; overflow: hidden; }
.cad-svg { width: 660px; height: 505px; color: #fff; --w: 1px; --tw: 2px; shape-rendering: crispEdges; }
.flange path, .fp { fill: none; stroke: currentColor; stroke-width: var(--w); vector-effect: non-scaling-stroke; }
.flange .thick { --w: var(--tw); }
.ucs { fill: none; stroke: #fff; stroke-width: 1; }
.vscroll { width: 17px; background: #f4f3f7; display: flex; flex-direction: column; align-items: center; padding: 6px 0 4px; }
.arr { width: 10px; height: 10px; fill: none; stroke: #444; stroke-width: 1.5; }
.sthumb { width: 15px; height: 17px; background: #cdcdcd; margin-bottom: 3px; }
.tabs { height: 15px; flex: none; display: flex; align-items: center; font-family: "Liberation Mono", monospace; font-size: 10px; padding-left: 1px; background: #f4f3f7; border-bottom: 1px solid #ddd; }
.navs { display: flex; border: 1px solid #999; border-top: 0; height: 14px; width: 71px; flex: none; margin-right: 9px; }
.navs svg { width: 18px; height: 13px; padding: 2px 4px; border-right: 1px solid #ccc; fill: #111; stroke: #111; stroke-width: .8; }
.tab { position: relative; z-index: 0; height: 15px; line-height: 14px; margin-right: 1px; width: 54px; text-align: center; flex: none; }
.tab::before { content: ""; position: absolute; inset: 0; z-index: -1; border-bottom: 1px solid #333; border-right: 1px solid #333; border-left: 1px solid #333; transform: skewX(-12deg); }
.tab-on { color: #fff; width: 30px; font-family: "Noto Sans CJK SC", sans-serif; font-size: 11px; margin-right: 2px; }
.tab-on::before { background: #000; }
.hs { flex: 1; display: flex; align-items: center; height: 14px; }
.hs-start { width: 4px; height: 13px; background: #ccc; margin-left: 216px; margin-right: 2px; }
.hthumb { width: 17px; height: 13px; background: #cdcdcd; }
.hs .hthumb { margin-right: 4px; }
.hs .arr:last-child { margin-right: 4px; }

.cmd { height: 61px; flex: none; display: flex; border-top: 2px solid #8a8a8a; padding: 4px 7px 0 6px; background: #f4f3f7; }
.vgrip { width: 7px; height: 48px; border-left: 1px solid #aaa; border-right: 1px solid #aaa; margin: 1px 4px 0 0; flex: none; }
.cmd-main { flex: 1; display: flex; flex-direction: column; border-top: 1px solid #999; border-left: 1px solid #999; background: #fff; min-width: 0; }
.history { height: 35px; display: flex; border-bottom: 1px solid #aaa; }
.history-text { flex: 1; padding-left: 1px; font-family: "Liberation Sans", "Noto Sans CJK SC", sans-serif; font-size: 12px; line-height: 14px; color: #222; letter-spacing: 1px; }
.cscroll { width: 17px; background: #f4f3f7; display: flex; flex-direction: column; align-items: center; gap: 6px; padding-top: 6px; }
.prompt { flex: 1; display: flex; align-items: center; }
.prompt-text { flex: 1; font-size: 12px; padding-left: 1px; letter-spacing: 1px; }
.cmd-hs { width: 69px; display: flex; align-items: center; height: 15px; background: #f4f3f7; gap: 1px; margin-right: 15px; }

.status { height: 23px; flex: none; display: flex; align-items: center; padding: 2px 2px 0 5px; gap: 4px; border-top: 1px solid #bbb; background: #f4f3f7; font-size: 12px; }
.coords { width: 250px; height: 18px; border: 1px solid #aaa; background: #f8f8f8; font-family: "Liberation Sans", sans-serif; font-size: 10.500px; line-height: 16px; letter-spacing: .8px; color: #333; }
.sb { height: 20px; line-height: 20px; border: 1px solid #d0d0d0; border-right-color: #fff; border-bottom-color: #ddd; padding: 0 1px; white-space: nowrap; margin-right: 1px; }
.sb.on { border: 0; border-left: 1px solid #333; border-top: 1px solid #333; padding: 0 0 0 1px; margin-right: 0; }
.warn { width: 23px; height: 20px; border: 1px solid #ccc; border-bottom: 0; padding: 0 1px; }
.warn svg { width: 20px; height: 19px; }
.tri { width: 0; height: 0; border-top: 4px solid #111; border-left: 4px solid transparent; border-right: 4px solid transparent; margin: 2px 4px 0 5px; }
.resize { width: 9px; height: 9px; margin-top: 9px; background: radial-gradient(circle at 50% 50%, #9a9a9a 1px, transparent 1.100px) 0 0 / 3px 3px; }

.pdf { left: 746px; top: 3px; width: 618px; height: 724px; display: flex; flex-direction: column; background: #ead9b4; }
.pdf-top { height: 77px; flex: none; background: repeating-linear-gradient(0deg, rgba(160, 120, 60, .09) 0 1px, rgba(255, 255, 255, .08) 1px 3px), linear-gradient(180deg, #efe2c4 0, #e3ca98 45%, #dcbf88 100%); border-top: 1px solid #f4f0e6; }
.ribbon { height: 21px; display: flex; padding-left: 73px; align-items: stretch; margin-top: 1px; position: relative; }
.rib { width: 62px; text-align: center; line-height: 21px; font-size: 12px; color: #8c5a2c; background: linear-gradient(90deg, #e3c89c, #edc79a); clip-path: polygon(7px 0, calc(100% - 7px) 0, 100% 100%, 0 100%); }
.rib-on { background: #ecdcb9; color: #7a5a34; }
.pdf-caps { position: absolute; right: 0; top: 4px; display: flex; gap: 11px; }
.pdf-caps svg { width: 12px; height: 12px; }
.pdf-tools { height: 54px; display: flex; align-items: center; }
.logo { width: 44px; height: 46px; margin: 0 0 12px 8px; }
.folder { width: 34px; height: 28px; margin: 0 0 6px 17px; }
.dash { width: 0; height: 28px; border-left: 1px dashed #b59b70; margin: 0 11px 4px 9px; }
.toggle { width: 123px; height: 30px; border-radius: 15px; background: #ad9a78; display: flex; color: #fff; flex: none; }
.tg { display: flex; align-items: center; gap: 4px; justify-content: center; width: 62px; border-radius: 15px; font-size: 12px; color: #5d4a30; }
.tg svg { width: 13px; height: 20px; }
.tg-on { background: #6e5438; color: #fff; }
.nav { width: 38px; height: 38px; margin-left: 12px; }
.pageinput { width: 46px; height: 22px; background: #fff; border: 1px solid #9c8a68; border-radius: 3px; margin: 4px 0 0 12px; text-align: right; line-height: 20px; padding-right: 2px; font-family: "Liberation Sans", sans-serif; font-size: 13px; color: #333; }
.pagetotal { margin: 4px 0 0 3px; color: #5d4a30; font-size: 12px; width: 36px; white-space: nowrap; }
.rot { width: 22px; height: 22px; margin: 4px 0 0 12px; }
.rot-a { margin-left: 27px; }
.rot-p { margin-left: 16px; }
.rot-m { margin-left: 10px; }
.pageinput-2 { width: 20px; margin-left: 14px; flex: none; text-align: left; padding-left: 3px; }

.doctabs { height: 30px; flex: none; display: flex; align-items: flex-end; background: repeating-linear-gradient(0deg, #866b40 0 2px, #937a50 2px 4px); border-top: 1px solid #6f5836; }
.dock { width: 16px; height: 14px; margin: 0 13px 7px 14px; }
.doctab { width: 143px; height: 28px; background: linear-gradient(180deg, #fff6e6, #f5e1c0); border-radius: 3px 3px 0 0; display: flex; align-items: center; padding-left: 4px; margin-right: 4px; }
.fav { width: 16px; height: 16px; margin-right: 7px; }
.tabname { font-size: 12px; color: #3c2f20; }
.tabx { margin-left: auto; margin-right: 11px; color: #a08a68; font-size: 11px; font-weight: 700; }
.plus { width: 29px; height: 26px; background: linear-gradient(180deg, #f2dcae, #e3c58e); border-radius: 2px 2px 0 0; text-align: center; line-height: 24px; font-size: 18px; color: #8a7250; }

.pdf-body { flex: 1; min-height: 0; display: flex; padding-left: 6px; background: #e6dcc4; }
.page { width: 594px; flex: none; background: #fff; position: relative; overflow: hidden; color: #111; font-family: "Liberation Serif", "Noto Sans CJK SC", serif; }
.page h1 { text-align: center; font-size: 21px; font-weight: 400; line-height: 28px; margin-top: 24px; padding-left: 14px; font-family: "Liberation Serif", "Noto Sans CJK SC", serif; -webkit-text-stroke: .3px #111; }
.page h2 { font-size: 15px; font-weight: 700; line-height: 20px; margin: 33px 0 0 22px; font-family: "Noto Sans CJK SC", sans-serif; letter-spacing: 2.400px; }
.req { list-style: none; margin: 13px 0 0 55px; font-family: "Noto Sans CJK SC", sans-serif; font-size: 14px; line-height: 21px; white-space: nowrap; letter-spacing: 1.600px; -webkit-text-stroke: .15px #111; }
.req li { height: 21px; display: block; line-height: 21px; }
.req b { font-weight: 700; }
.req .n { display: inline-block; width: 24px; font-weight: 700; letter-spacing: 0; }
.lat { font-family: "Liberation Serif", serif; font-size: 16px; letter-spacing: .15px; }
.l1 { letter-spacing: 1.750px; }
.l1 .lat { letter-spacing: .3px; }
.l3, .l4, .l5 { letter-spacing: 3.300px; padding-left: 58px; font-size: 13px; }
.l3 { padding-left: 31px; }
.l5 { padding-left: 31px; letter-spacing: 3px; }
.l6 { letter-spacing: 1.850px; }
.dot { display: inline-block; vertical-align: -1px; width: 10px; height: 10px; border-radius: 50%; background: #111; margin-right: 17px; }
.scan { width: 594px; height: 353px; position: absolute; left: 0; top: 250px; color: #1a1a1a; --w: 1.300px; --tw: 2.400px; }
.scan-x { fill: none; stroke: #1a1a1a; stroke-width: 1.200; }
.pdf-vs { flex: 1; background: #f2f1ec; border-left: 4px solid #d9cbb0; position: relative; display: flex; flex-direction: column; align-items: center; justify-content: flex-end; padding-bottom: 4px; }
.pdf-thumb { position: absolute; left: 0; top: 193px; width: 14px; height: 17px; background: #cdcdcd; }
.pdf-green { position: absolute; left: 4px; top: 480px; width: 6px; height: 60px; border-radius: 3px; background: linear-gradient(180deg, #d4e8d8, #2fb86a 60%, #d4ecd8); }

.pdf-hs { height: 14px; flex: none; background: #cdcdcd; display: flex; align-items: center; padding-left: 6px; position: relative; }
.pdf-hs .arr:first-child { background: #f2f2f2; }
.pdf-hthumb { flex: 1; }
.pdf-hs .arr:nth-child(3) { margin-right: 4px; }
.pdf-hs .resize { margin-top: 0; margin-right: 1px; }

.cursor { position: absolute; left: 1020px; top: 331px; width: 12px; height: 20px; }

.ime { position: absolute; left: 815px; top: 702px; width: 208px; height: 27px; background: #fff; border: 1px solid #c8c8c8; display: flex; align-items: center; gap: 7px; padding-left: 1px; }
.ime svg { width: 15px; height: 15px; }
.ime .ime-s { width: 28px; height: 26px; margin-right: -2px; }
.ime-a { font: 700 17px "Liberation Sans", sans-serif; color: #1f6fb5; width: 15px; text-align: center; }

.taskbar { position: absolute; left: 0; top: 727px; width: 1364px; height: 41px; background: #8fa3b0; display: flex; align-items: stretch; padding-left: 52px; gap: 3px; border-top: 1px solid #7f97a8; }
.start { position: absolute; left: 16px; top: 12px; width: 16px; height: 16px; }
.task { width: 158px; background: #9fb2bf; border: 1px solid #b7c6d0; display: flex; align-items: center; font-size: 12px; color: #1c2730; gap: 4px; padding-left: 8px; white-space: nowrap; }
.task-on { background: #a9bac6; }
.t-i { width: 24px; height: 20px; }
.t-cad { width: 23px; height: 23px; }
.t-pdf { width: 23px; height: 23px; }
.task:nth-child(3) span { font-family: "Open Sans", sans-serif; letter-spacing: .3px; }
.tray { margin-left: auto; display: flex; align-items: center; position: relative; }
.tr-usb { width: 12px; height: 16px; margin-right: 16px; }
.tr-up { width: 14px; height: 8px; margin-right: 8px; }
.tr-g { width: 18px; height: 18px; margin-right: 9px; }
.tr-w { width: 14px; height: 13px; margin-right: 8px; }
.tr-a { font: 700 17px "Liberation Sans", sans-serif; color: #fff; -webkit-text-stroke: 1px #111; width: 14px; margin-right: 13px; }
.tr-s { width: 18px; height: 18px; }
.clock { width: 76px; margin-left: 7px; display: flex; flex-direction: column; align-items: center; font: 12.500px "Open Sans", sans-serif; color: #111; line-height: 20px; }
.notify { position: relative; width: 36px; margin: 0 18px 0 2px; height: 30px; }
.notify svg { width: 17px; height: 17px; margin: 2px 0 0 9px; }
.badge { position: absolute; left: 17px; top: 10px; width: 16px; height: 16px; border-radius: 50%; background: #a5b0b8; border: 1px solid #555; font: 700 11px/14px "Liberation Sans", sans-serif; text-align: center; color: #111; }
```
